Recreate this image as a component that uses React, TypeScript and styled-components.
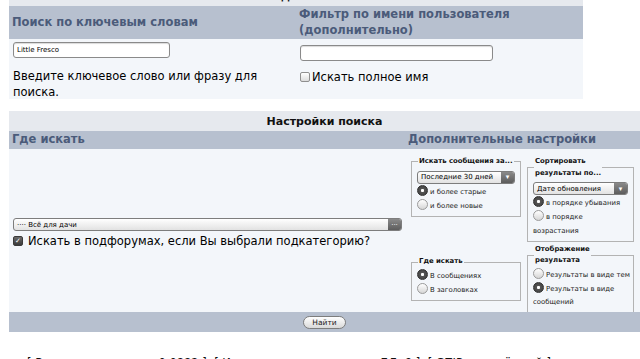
import React from "react";
import styled, { createGlobalStyle } from "styled-components";

const GlobalStyle = createGlobalStyle`
  html, body {
    margin: 0;
    padding: 0;
    background: #ffffff;
    overflow: hidden;
  }
  body {
    font-family: "DejaVu Sans", Verdana, sans-serif;
    color: #000;
  }
`;

const Page = styled.div`
  margin-top: -14px;
  padding-left: 9px;
`;

const Table = styled.div<{ $width: number }>`
  width: ${(p) => p.$width}px;
`;

const TitleRow = styled.div`
  height: 20px;
  background: #e6e9ee;
  display: flex;
  align-items: center;
  justify-content: center;
  font-weight: bold;
  font-size: 11px;
  color: #111;
`;

const HeadRow = styled.div<{ $cols: string; $height: number }>`
  display: grid;
  grid-template-columns: ${(p) => p.$cols};
  height: ${(p) => p.$height}px;
  background: #b7c0cf;
`;

const HeadCell = styled.div<{ $size?: number }>`
  display: flex;
  align-items: center;
  padding: 0 3px;
  font-weight: bold;
  font-size: ${(p) => p.$size ?? 11.5}px;
  line-height: 1.35;
  color: #4b5b7a;
`;

const BodyRow = styled.div<{ $cols: string; $height: number }>`
  display: grid;
  grid-template-columns: ${(p) => p.$cols};
  grid-template-rows: ${(p) => p.$height}px;
  height: ${(p) => p.$height}px;
  background: #f3f6fa;
  overflow: hidden;
`;

const Cell = styled.div<{ $top?: number }>`
  padding: ${(p) => p.$top ?? 3}px 4px 0;
`;

const TextInput = styled.div<{ $width: number }>`
  width: ${(p) => p.$width}px;
  height: 14px;
  border: 1px solid #8a8a8a;
  border-radius: 3px;
  background: #fff;
  box-shadow: inset 0 1px 1px rgba(0, 0, 0, 0.15);
  font-size: 7px;
  line-height: 14px;
  padding-left: 3px;
  box-sizing: content-box;
`;

const Hint = styled.p`
  margin: 10px 0 0;
  font-size: 11.5px;
  line-height: 16px;
`;

const CheckLine = styled.label`
  display: flex;
  align-items: center;
  gap: 2px;
  margin-top: 9px;
  font-size: 11.5px;
`;

const Box = styled.span<{ $checked?: boolean }>`
  display: inline-flex;
  align-items: center;
  justify-content: center;
  width: 8px;
  height: 8px;
  border-radius: 2px;
  border: 1px solid ${(p) => (p.$checked ? "#3a3a3a" : "#8f8f8f")};
  background: ${(p) =>
    p.$checked ? "linear-gradient(#6a6a6a, #3a3a3a)" : "linear-gradient(#ffffff, #dcdcdc)"};
  color: #fff;
  font-size: 7px;
  line-height: 1;
  flex: none;
`;

const LeftCell = styled.div`
  display: flex;
  flex-direction: column;
  justify-content: center;
  padding: 5px 4px 0;
`;

const Select = styled.div<{ $width: number }>`
  width: ${(p) => p.$width}px;
  height: 13px;
  border: 1px solid #7d7d7d;
  border-radius: 3px;
  background: linear-gradient(#ffffff, #e2e2e2);
  font-size: 7px;
  padding-left: 3px;
  box-sizing: border-box;
  display: flex;
  align-items: center;
  overflow: hidden;
`;

const SelectButton = styled.span<{ $w: number }>`
  margin-left: auto;
  width: ${(p) => p.$w}px;
  height: 100%;
  background: linear-gradient(#8a8a8a, #5c5c5c);
  color: #fff;
  display: flex;
  align-items: center;
  justify-content: center;
  font-size: 7px;
  flex: none;
`;

const SubCheck = styled.label`
  display: flex;
  align-items: center;
  gap: 5px;
  margin-top: 3px;
  font-size: 11.5px;
`;

const RightCell = styled.div`
  display: grid;
  grid-template-columns: 110px 107px;
  column-gap: 6px;
  row-gap: 2px;
  padding: 7px 0 0 6px;
  align-content: start;
`;

const Fieldset = styled.fieldset<{ $align?: string }>`
  margin: 0;
  padding: 1px 2px 3px 5px;
  border: 1px solid #b3b3b3;
  align-self: ${(p) => p.$align ?? "start"};
  min-width: 0;
`;

const Legend = styled.legend`
  padding: 0 1px;
  margin-left: 1px;
  font-size: 6.9px;
  font-weight: bold;
  line-height: 11.5px;
  color: #111;
  white-space: nowrap;
`;

const RadioLine = styled.div`
  font-size: 6.9px;
  line-height: 13.3px;
  color: #222;
`;

const Radio = styled.span<{ $checked?: boolean }>`
  display: inline-block;
  vertical-align: -2px;
  width: 9px;
  height: 9px;
  border-radius: 50%;
  margin-right: 2px;
  border: 1px solid ${(p) => (p.$checked ? "#333" : "#9a9a9a")};
  background: ${(p) =>
    p.$checked
      ? "radial-gradient(circle, #ffffff 0 1.3px, #555 1.8px, #3a3a3a 100%)"
      : "linear-gradient(#ffffff, #d6d6d6)"};
`;

const FooterRow = styled.div`
  height: 20px;
  background: #b7c0cf;
  display: flex;
  align-items: center;
  justify-content: center;
`;

const Button = styled.button`
  font-family: inherit;
  font-size: 7.5px;
  height: 13px;
  padding: 0 8px;
  border: 1px solid #7d7d7d;
  border-radius: 7px;
  background: linear-gradient(#ffffff, #d9d9d9);
  color: #222;
  line-height: 11px;
`;

const Stats = styled.div`
  margin-top: 24px;
  padding-left: 18px;
  font-size: 11.5px;
  white-space: pre;
  color: #111;
`;

const Opt = ({ checked, children }: { checked?: boolean; children: React.ReactNode }) => (
  <RadioLine>
    <Radio $checked={checked} />
    {children}
  </RadioLine>
);

export default function App() {
  return (
    <>
      <GlobalStyle />
      <Page>
        <Table $width={574}>
          <TitleRow>Слова для поиска</TitleRow>
          <HeadRow $cols="287px 287px" $height={33}>
            <HeadCell>Поиск по ключевым словам</HeadCell>
            <HeadCell>
              Фильтр по имени пользователя
              <br />
              (дополнительно)
            </HeadCell>
          </HeadRow>
          <BodyRow $cols="287px 287px" $height={60}>
            <Cell>
              <TextInput $width={152}>Little Fresco</TextInput>
              <Hint>Введите ключевое слово или фразу для поиска.</Hint>
            </Cell>
            <Cell $top={6}>
              <TextInput $width={188} />
              <CheckLine>
                <Box />
                Искать полное имя
              </CheckLine>
            </Cell>
          </BodyRow>
        </Table>

        <Table $width={631} style={{ marginTop: 12 }}>
          <TitleRow>Настройки поиска</TitleRow>
          <HeadRow $cols="396px 235px" $height={18}>
            <HeadCell>Где искать</HeadCell>
            <HeadCell $size={11.5}>Дополнительные настройки</HeadCell>
          </HeadRow>
          <BodyRow $cols="396px 235px" $height={163}>
            <LeftCell>
              <Select $width={389}>
                ···· Всё для дачи
                <SelectButton $w={13}>···</SelectButton>
              </Select>
              <SubCheck>
                <Box $checked>✓</Box>
                Искать в подфорумах, если Вы выбрали подкатегорию?
              </SubCheck>
            </LeftCell>
            <RightCell>
              <Fieldset>
                <Legend>Искать сообщения за...</Legend>
                <Select $width={98} style={{ margin: "2px 0 1px" }}>
                  Последние 30 дней
                  <SelectButton $w={13}>▾</SelectButton>
                </Select>
                <Opt checked>и более старые</Opt>
                <Opt>и более новые</Opt>
              </Fieldset>
              <Fieldset>
                <Legend>
                  Сортировать
                  <br />
                  результаты по...
                </Legend>
                <Select $width={95} style={{ margin: "2px 0 1px" }}>
                  Дате обновления
                  <SelectButton $w={13}>▾</SelectButton>
                </Select>
                <Opt checked>в порядке убывания</Opt>
                <Opt>
                  в порядке
                  <br />
                  возрастания
                </Opt>
              </Fieldset>
              <Fieldset $align="center">
                <Legend>Где искать</Legend>
                <Opt checked>В сообщениях</Opt>
                <Opt>В заголовках</Opt>
              </Fieldset>
              <Fieldset>
                <Legend>
                  Отображение
                  <br />
                  результата
                </Legend>
                <Opt>Результаты в виде тем</Opt>
                <Opt checked>Результаты в виде сообщений</Opt>
              </Fieldset>
            </RightCell>
          </BodyRow>
          <FooterRow>
            <Button>Найти</Button>
          </FooterRow>
        </Table>

        <Stats>{"[ Время выполнения: 0.0882 ]  [ Использовано запросов к БД: 9 ]  [ GZIP включённый ]"}</Stats>
      </Page>
    </>
  );
}
